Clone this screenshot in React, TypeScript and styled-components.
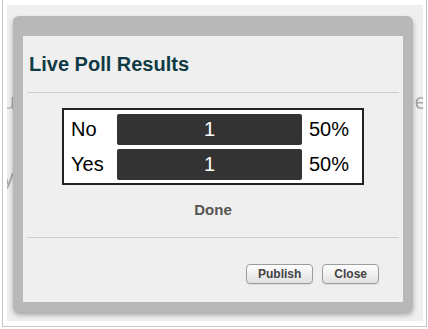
import React from 'react';
import styled, {createGlobalStyle} from "styled-components";

const GlobalStyle = createGlobalStyle`
  body {
    margin: 0;
    background: #ffffff;
    font-family: "Liberation Sans", Arial, sans-serif;
  }
`

type Result = { label: string; votes: number; percent: number }

const results: Result[] = [
    {label: "No", votes: 1, percent: 50},
    {label: "Yes", votes: 1, percent: 50},
]

export default function App() {
    return (
        <>
            <GlobalStyle/>
            <Frame>
                <Backdrop>
                    <PageLine $top={84}>
                        <span>u</span>
                        <span>e:</span>
                    </PageLine>
                    <PageLine $top={160}>
                        <span>y</span>
                        <span></span>
                    </PageLine>
                    <Dialog>
                        <Content>
                            <Title>Live Poll Results</Title>
                            <Rule/>
                            <ResultsBox>
                                {results.map(r => (
                                    <React.Fragment key={r.label}>
                                        <Label>{r.label}</Label>
                                        <Bar>{r.votes}</Bar>
                                        <Percent>{r.percent}%</Percent>
                                    </React.Fragment>
                                ))}
                            </ResultsBox>
                            <Status>Done</Status>
                            <Rule $top={18}/>
                            <Footer>
                                <Button>Publish</Button>
                                <Button>Close</Button>
                            </Footer>
                        </Content>
                    </Dialog>
                </Backdrop>
            </Frame>
        </>
    );
}

const Frame = styled.div`
  margin-left: 2px;
  width: 416px;
  padding: 5px 3px 5px 4px;
  border: 1px solid #c6c6c6;
  border-top: none;
`

const Backdrop = styled.div`
  position: relative;
  height: 316px;
  background: #efefef;
  overflow: hidden;
`

const PageLine = styled.div<{ $top: number }>`
  position: absolute;
  top: ${p => p.$top}px;
  left: -4px;
  right: -10px;
  display: flex;
  justify-content: space-between;
  font-size: 22px;
  color: #a9a9a9;
  filter: blur(0.6px);
`

const Dialog = styled.div`
  position: absolute;
  top: 11px;
  left: 6px;
  width: 380px;
  padding: 20px 10px 10px;
  background: #b8b8b8;
  border-radius: 6px;
  box-shadow: 0 3px 5px rgba(0, 0, 0, 0.3);
`

const Content = styled.div`
  height: 266px;
  background: #efefef;
  display: flex;
  flex-direction: column;
`

const Title = styled.h2`
  margin: 0;
  padding: 17px 0 16px 6px;
  font-size: 20px;
  line-height: 23px;
  font-weight: bold;
  color: #0f3a44;
`

const Rule = styled.div<{ $top?: number }>`
  height: 1px;
  margin: ${p => p.$top ?? 0}px 4px 0;
  background: #c6d1cd;
`

const ResultsBox = styled.div`
  align-self: center;
  margin-top: 15px;
  display: grid;
  grid-template-columns: 53px 185px 60px;
  grid-auto-rows: 31px;
  row-gap: 4px;
  padding: 4px 0 3px;
  background: #ffffff;
  border: 2px solid #222222;
  font-size: 20px;
`

const Label = styled.div`
  display: flex;
  align-items: center;
  padding-left: 7px;
  color: #000;
`

const Bar = styled.div`
  display: flex;
  align-items: center;
  justify-content: center;
  background: #333333;
  border-radius: 2px;
  color: #ffffff;
`

const Percent = styled.div`
  display: flex;
  align-items: center;
  padding-left: 7px;
  color: #000;
`

const Status = styled.div`
  margin-top: 16px;
  text-align: center;
  font-size: 15px;
  line-height: 18px;
  font-weight: bold;
  color: #555555;
`

const Footer = styled.div`
  display: flex;
  justify-content: flex-end;
  gap: 9px;
  padding: 26px 24px 0 0;
`

const Button = styled.button`
  height: 20px;
  padding: 0 11px;
  border: 1px solid #9c9c9c;
  border-radius: 4px;
  background: linear-gradient(#fdfdfd, #e1e1e1);
  box-shadow: 0 1px 1px rgba(0, 0, 0, 0.08);
  font-family: "Liberation Sans", Arial, sans-serif;
  font-size: 12px;
  font-weight: bold;
  color: #444444;
`
